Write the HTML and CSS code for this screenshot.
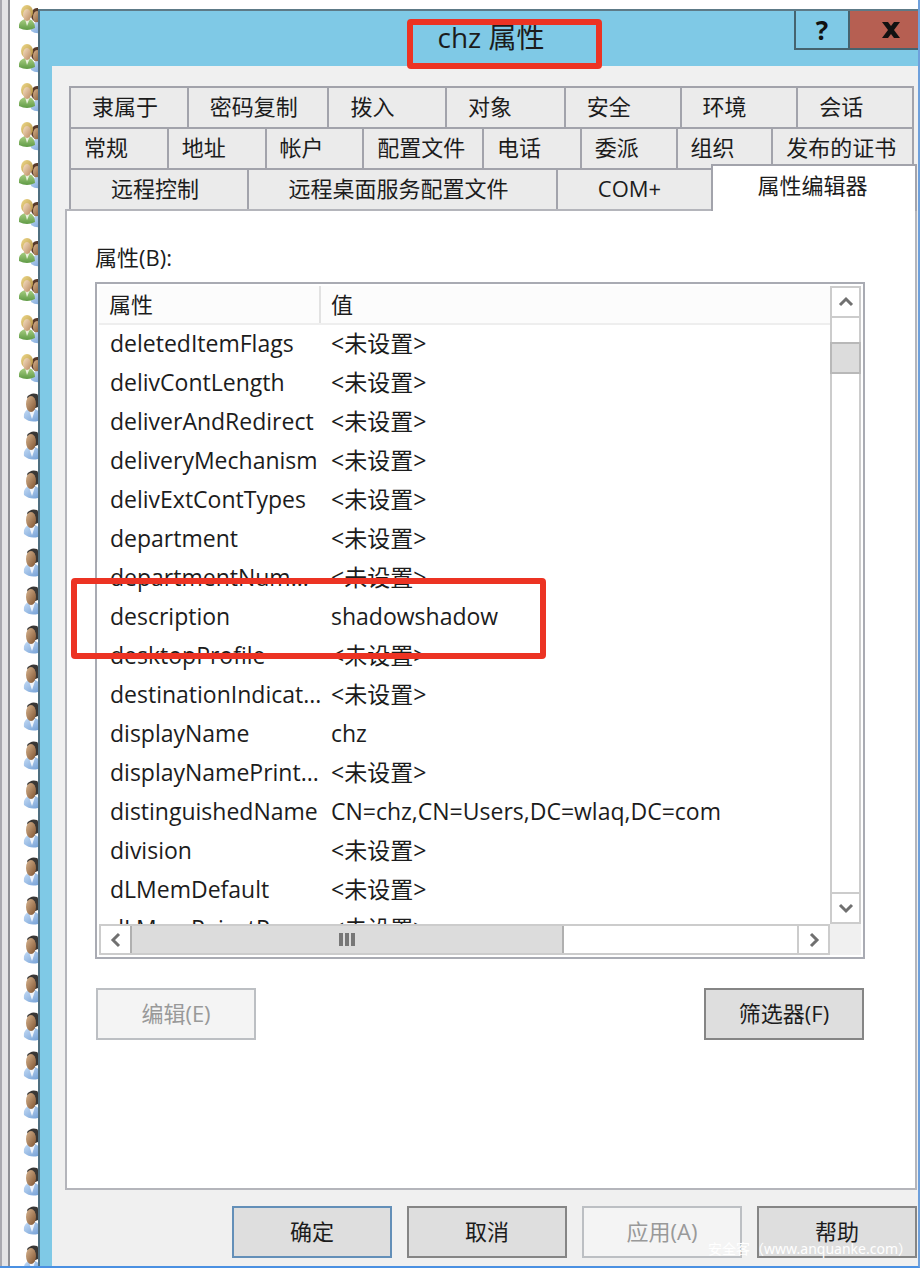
FILE: index.html
```html
<!DOCTYPE html>
<html lang="zh-CN">
<head>
<meta charset="utf-8">
<meta name="viewport" content="width=device-width, initial-scale=1">
<title>chz 属性</title>
<link rel="stylesheet" href="styles.css">
</head>
<body>
<svg class="defs" aria-hidden="true">
  <defs>
    <linearGradient id="hair" x1="0" y1="0" x2="1" y2="1"><stop offset="0" stop-color="#efd98a"/><stop offset="1" stop-color="#b39143"/></linearGradient>
    <linearGradient id="face" x1="0" y1="0" x2="1" y2="1"><stop offset="0" stop-color="#f6dfc3"/><stop offset="1" stop-color="#b98a60"/></linearGradient>
    <linearGradient id="tan" x1="0" y1="0" x2="1" y2="1"><stop offset="0" stop-color="#d8b48e"/><stop offset="1" stop-color="#7d5230"/></linearGradient>
    <linearGradient id="green" x1="0" y1="0" x2="0" y2="1"><stop offset="0" stop-color="#a9cf83"/><stop offset="1" stop-color="#5f9a45"/></linearGradient>
    <linearGradient id="blue" x1="0" y1="0" x2="1" y2="1"><stop offset="0" stop-color="#c5dcf6"/><stop offset="1" stop-color="#6f9cd3"/></linearGradient>
    <symbol id="group" viewBox="0 0 28 30">
      <ellipse cx="18" cy="11" rx="6" ry="7" fill="#573a2a"/>
      <ellipse cx="18" cy="13" rx="4" ry="6" fill="url(#tan)"/>
      <path d="M12 27Q12 19 18 18Q26 19 26 28Q18 31 12 27Z" fill="url(#blue)"/>
      <path d="M0 24Q-1 17 6 15H10Q16 17 16 24Q8 28 0 24Z" fill="url(#green)"/>
      <path d="M6 15L8 22L11 15Z" fill="#e9f0dc"/>
      <ellipse cx="8" cy="8" rx="6" ry="7" fill="url(#hair)"/>
      <ellipse cx="8" cy="11" rx="4" ry="6" fill="url(#face)"/>
    </symbol>
    <symbol id="user" viewBox="0 0 28 30">
      <path d="M5 26Q4 19 10 17H16Q22 19 22 28Q12 32 5 26Z" fill="url(#blue)"/>
      <path d="M10 18L13 27L16 18Z" fill="#f1f5fb"/>
      <path d="M8 5Q12 0 18 2Q22 6 19 15L14 17Z" fill="#393735"/>
      <ellipse cx="12" cy="12" rx="5" ry="8" fill="url(#tan)"/>
    </symbol>
  </defs>
</svg>
<div class="screen">
  <aside class="tree"><ul class="icons" id="icons"></ul></aside>
  <main class="dialog">
    <header class="titlebar">
      <h1 class="title">chz 属性<span class="mark mark-title"></span></h1>
      <div class="caption">
        <button class="cap help" aria-label="帮助">?</button>
        <button class="cap close" aria-label="关闭"><svg width="18" height="16" viewBox="0 0 18 16"><path d="M0 0H6L9 4L12 0H18L12 8L18 16H12L9 12L6 16H0L6 8Z" fill="#111"/></svg></button>
      </div>
    </header>
    <div class="body">
      <div class="tabs" role="tablist">
        <div class="tabrow row-a">
          <button class="tab" role="tab">隶属于</button><button class="tab" role="tab">密码复制</button><button class="tab" role="tab">拨入</button><button class="tab" role="tab">对象</button><button class="tab" role="tab">安全</button><button class="tab" role="tab">环境</button><button class="tab" role="tab">会话</button>
        </div>
        <div class="tabrow row-b">
          <button class="tab" role="tab">常规</button><button class="tab" role="tab">地址</button><button class="tab" role="tab">帐户</button><button class="tab" role="tab">配置文件</button><button class="tab" role="tab">电话</button><button class="tab" role="tab">委派</button><button class="tab" role="tab">组织</button><button class="tab" role="tab">发布的证书</button>
        </div>
        <div class="tabrow row-c">
          <button class="tab" role="tab">远程控制</button><button class="tab" role="tab">远程桌面服务配置文件</button><button class="tab" role="tab">COM+</button><button class="tab active" role="tab" aria-selected="true">属性编辑器</button>
        </div>
      </div>
      <section class="panel" role="tabpanel">
        <h2 class="label" id="attrs">属性(B):</h2>
        <div class="list">
          <div class="view">
            <table class="grid" aria-labelledby="attrs">
              <thead><tr><th class="name">属性</th><th>值</th></tr></thead>
              <tbody>
                <tr><td>deletedItemFlags</td><td>&lt;未设置&gt;</td></tr>
                <tr><td>delivContLength</td><td>&lt;未设置&gt;</td></tr>
                <tr><td>deliverAndRedirect</td><td>&lt;未设置&gt;</td></tr>
                <tr><td>deliveryMechanism</td><td>&lt;未设置&gt;</td></tr>
                <tr><td>delivExtContTypes</td><td>&lt;未设置&gt;</td></tr>
                <tr><td>department</td><td>&lt;未设置&gt;</td></tr>
                <tr><td>departmentNum...</td><td>&lt;未设置&gt;</td></tr>
                <tr><td>description</td><td>shadowshadow</td></tr>
                <tr><td>desktopProfile</td><td>&lt;未设置&gt;</td></tr>
                <tr><td>destinationIndicat...</td><td>&lt;未设置&gt;</td></tr>
                <tr><td>displayName</td><td>chz</td></tr>
                <tr><td>displayNamePrint...</td><td>&lt;未设置&gt;</td></tr>
                <tr><td>distinguishedName</td><td>CN=chz,CN=Users,DC=wlaq,DC=com</td></tr>
                <tr><td>division</td><td>&lt;未设置&gt;</td></tr>
                <tr><td>dLMemDefault</td><td>&lt;未设置&gt;</td></tr>
                <tr><td>dLMemRejectP...</td><td>&lt;未设置&gt;</td></tr>
              </tbody>
            </table>
          </div>
          <div class="vbar">
            <button class="arrow" aria-label="向上"><svg width="16" height="12" viewBox="0 0 16 12"><path d="M2 9L8 3L14 9" /></svg></button>
            <span class="vthumb"></span>
            <button class="arrow" aria-label="向下"><svg width="16" height="12" viewBox="0 0 16 12"><path d="M2 3L8 9L14 3" /></svg></button>
          </div>
          <div class="hbar">
            <button class="arrow" aria-label="向左"><svg width="12" height="16" viewBox="0 0 12 16"><path d="M9 2L3 8L9 14" /></svg></button>
            <div class="htrack"><span class="hthumb"><i></i><i></i><i></i></span></div>
            <button class="arrow" aria-label="向右"><svg width="12" height="16" viewBox="0 0 12 16"><path d="M3 2L9 8L3 14" /></svg></button>
          </div>
          <span class="mark mark-row"></span>
        </div>
        <div class="actions">
          <button class="btn" disabled>编辑(E)</button>
          <button class="btn">筛选器(F)</button>
        </div>
      </section>
      <footer class="footer">
        <button class="btn primary">确定</button>
        <button class="btn">取消</button>
        <button class="btn" disabled>应用(A)</button>
        <button class="btn">帮助</button>
      </footer>
    </div>
  </main>
  <div class="watermark">安全客（www.anquanke.com）</div>
</div>
<script src="icons.js"></script>
</body>
</html>
```
FILE: styles.css
```css
* { box-sizing: border-box; }
body {
  margin: 0;
  font: 22px/30px "Open Sans", "Noto Sans CJK SC", sans-serif;
  color: #1c1c1c;
  background: #fff;
}
button { font: inherit; color: inherit; margin: 0; padding: 0; border-radius: 0; }
.defs { position: absolute; width: 0; height: 0; }

.screen {
  position: relative;
  display: flex;
  height: 100vh;
  min-height: 1268px;
  overflow: hidden;
  border-right: 2px solid #6ea0dc;
  border-bottom: 2px solid #4a90e2;
}

/* list behind the dialog */
.tree {
  flex: 0 0 38px;
  border-left: 2px solid #a9a9b0;
  background: linear-gradient(90deg, #e4e4e6 0 6px, #8f9096 6px 8px, #fff 8px);
  overflow: hidden;
}
.icons {
  display: grid;
  grid-auto-rows: 1fr;
  height: calc(100% + 12px);
  margin: 0;
  padding: 0 0 0 17px;
  list-style: none;
}
.icons li { display: flex; align-items: center; min-height: 0; }
.icons svg { flex: none; width: 28px; height: 30px; }

/* dialog frame */
.dialog {
  flex: 1;
  min-width: 0;
  display: flex;
  flex-direction: column;
  margin-top: 9px;
  border-top: 2px solid #5d7a87;
  border-left: 2px solid #4e6f80;
  background: #7fc9e6;
}
.titlebar { position: relative; display: flex; justify-content: center; height: 55px; }
.title {
  position: relative;
  margin: 10px 0 0 24px;
  font-size: 28px;
  font-weight: 400;
  line-height: 32px;
}
.caption { position: absolute; top: 0; right: 0; display: flex; height: 39px; border: 2px solid #45636f; border-width: 0 0 2px 2px; }
.cap { display: flex; align-items: center; justify-content: center; border: 0; }
.help { width: 52px; background: #7fc9e6; font-weight: 700; font-size: 26px; color: #111; }
.close { width: 70px; padding-left: 14px; background: #b65f52; border-left: 2px solid #45636f; }

.body {
  flex: 1;
  display: flex;
  flex-direction: column;
  margin-left: 12px;
  padding: 20px 1px 8px 13px;
  background: #f0f0f0;
}

/* tabs */
.tabs { padding: 0 3px 0 4px; }
.tabrow { display: grid; height: 41px; border-left: 2px solid #a2a3ab; }
.row-a { grid-template-columns: 118fr 141fr 118fr 119fr 116fr 117fr 116fr; }
.row-b { grid-template-columns: 98fr 98fr 98fr 120fr 98fr 96fr 96fr 141fr; }
.row-c { grid-template-columns: 178fr 310fr 156fr 204fr; margin-right: -3px; }
.tab {
  padding: 0 0 3px 21px;
  text-align: left;
  white-space: nowrap;
  background: #ebebeb;
  border: solid #a2a3ab;
  border-width: 2px 2px 0 0;
}
.row-b .tab { padding-left: 13px; }
.row-c .tab { padding-left: 40px; }
.row-c .tab.active { background: #fff; border-left: 2px solid #a2a3ab; margin: -4px 0 -2px -2px; padding: 0 0 7px 44px; z-index: 1; }

.panel {
  flex: 1;
  padding: 30px 50px 0 28px;
  background: #fff;
  border: 2px solid #b4b5bb;
}
.label { margin: 0 0 9px; font-size: 22px; font-weight: 400; line-height: 32px; }

/* attribute list */
.list {
  position: relative;
  display: grid;
  grid-template: 638px 31px / 1fr 31px;
  padding: 2px;
  border: 2px solid #a9abb3;
  background: #fff;
}
.view { overflow: hidden; }
.grid { width: 100%; border-collapse: collapse; table-layout: fixed; font-size: 23px; }
.grid th, .grid td { height: 39px; padding: 0 0 2px 11px; text-align: left; font-weight: 400; white-space: nowrap; }
.grid th { height: 38px; padding-left: 10px; font-size: 22px; background: #fcfcfc; border-bottom: 2px solid #eee; }
.grid .name { width: 221px; border-right: 2px solid #e2e2e2; }
.vbar { display: flex; flex-direction: column; justify-content: space-between; border: 2px solid #ccc; }
.vthumb { height: 32px; margin: 24px -2px auto; background: #dcdcdc; border: 2px solid #b8b8b8; }
.arrow { display: flex; align-items: center; justify-content: center; flex: none; width: 29px; height: 27px; background: #fff; border: 0; }
.vbar .arrow { width: 27px; height: 30px; }
.vbar .arrow:first-child { border-bottom: 2px solid #ccc; }
.vbar .arrow:last-child { border-top: 2px solid #ccc; }
.arrow path { fill: none; stroke: #707070; stroke-width: 3; }
.hbar { display: flex; grid-area: 2 / 1; border: 2px solid #ccc; }
.htrack { flex: 1; border-right: 2px solid #ccc; }
.hthumb {
  display: flex;
  align-items: center;
  justify-content: center;
  gap: 2px;
  width: 65%;
  height: 100%;
  background: #dcdcdc;
  border: 2px solid #b0b0b0;
  border-width: 0 2px;
}
.hthumb i { width: 4px; height: 13px; background: #777; }
.list::after { content: ""; grid-area: 2 / 2; background: #f0f0f0; }

/* buttons */
.actions { display: flex; justify-content: space-between; margin-top: 29px; padding: 0 1px; }
.btn { width: 160px; height: 52px; padding-bottom: 3px; background: #dedede; border: 2px solid #858585; }
.btn:disabled { background: #f4f4f4; border-color: #bcbfc3; color: #999; }
.btn.primary { border-color: #638fb8; }
.footer { display: flex; justify-content: flex-end; gap: 15px; margin-top: 16px; }

/* highlights */
.mark { position: absolute; border: 6px solid #ec3323; border-radius: 4px; pointer-events: none; }
.mark-title { left: -31px; top: -2px; width: 195px; height: 50px; z-index: 2; }
.mark-row { left: -26px; top: 294px; width: 475px; height: 81px; }

.watermark {
  position: absolute;
  right: 6px;
  bottom: 5px;
  color: #fff;
  font: 14px/24px "Noto Sans", "Noto Sans CJK SC", sans-serif;
}
```
FILE: icons.js
```javascript
const list = document.getElementById("icons");
for (let i = 0; i < 33; i++) {
  const kind = i < 10 ? "group" : "user";
  list.insertAdjacentHTML("beforeend", `<li><svg aria-hidden="true"><use href="#${kind}"/></svg></li>`);
}
```
